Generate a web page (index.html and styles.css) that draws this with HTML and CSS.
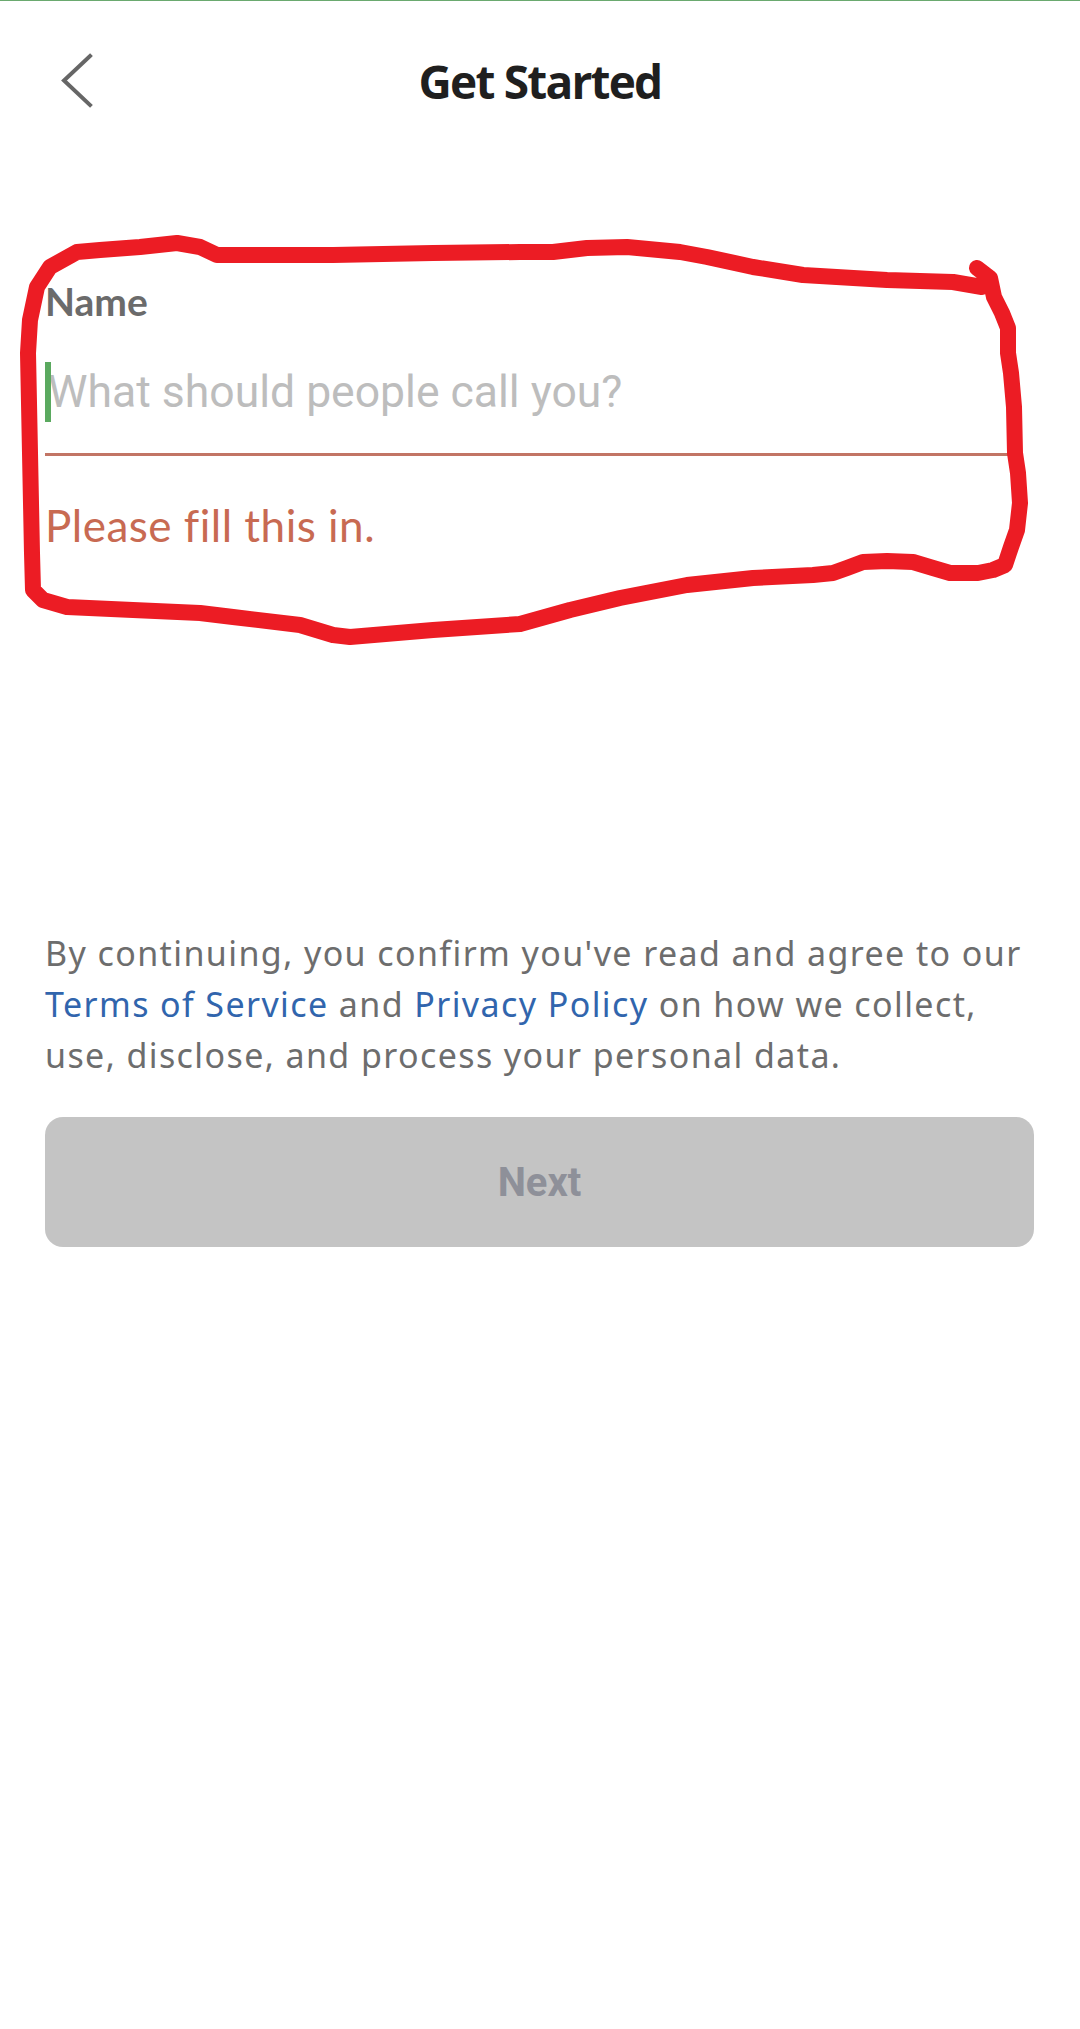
FILE: index.html
```html
<!DOCTYPE html>
<html lang="en">
<head>
    <meta charset="UTF-8">
    <meta name="viewport" content="width=device-width, initial-scale=1.0">
    <title>Get Started</title>
    <link rel="stylesheet" href="styles.css">
</head>
<body>
    <div class="screen">
        <header class="topbar">
            <button class="back" aria-label="Back">
                <svg width="34" height="56" viewBox="0 0 34 56">
                    <polyline points="30,3 4,27.5 30,52" fill="none" stroke="#666" stroke-width="4" stroke-linecap="square"/>
                </svg>
            </button>
            <h1 class="title">Get Started</h1>
            <span class="spacer"></span>
        </header>

        <main class="content">
            <div class="form">
                <label class="label" for="name">Name</label>
                <div class="field">
                    <span class="caret"></span>
                    <input type="text" id="name" placeholder="What should people call you?">
                </div>
                <p class="error">Please fill this in.</p>
            </div>

            <p class="terms">
                By continuing, you confirm you've read and agree to our
                <a href="#">Terms of Service</a> and <a href="#">Privacy Policy</a> on how we collect,
                use, disclose, and process your personal data.
            </p>

            <button class="next" disabled>Next</button>
        </main>

        <!-- hand drawn marker around the name field -->
        <svg class="scribble" width="1080" height="700" viewBox="0 0 1080 700">
            <path d="M977 268 L990 278 L994 297 L1002 313 L1008 328 L1008 353 L1011 373 L1014 407 L1015 453 L1018 473 L1020 503 L1017 530 L1011 547 L1005 565 L993 570 L978 573 L950 573 L933 568 L913 562 L887 561 L863 562 L847 568 L833 573 L813 575 L753 578 L687 585 L620 598 L570 610 L520 624 L433 630 L350 637 L333 635 L300 625 L233 617 L200 613 L133 610 L67 607 L43 600 L33 590 L32 553 L30 453 L28 353 L30 320 L37 287 L50 267 L77 252 L100 250 L140 247 L177 243 L200 247 L217 255 L253 255 L333 255 L433 253 L520 252 L553 252 L587 248 L627 247 L680 252 L707 257 L753 267 L803 275 L887 280 L953 282 L982 287"
                  fill="none" stroke="#ec1c24" stroke-width="16" stroke-linecap="round" stroke-linejoin="round"/>
        </svg>
    </div>
</body>
</html>
```

FILE: styles.css
```css
* {
    box-sizing: border-box;
}

body {
    margin: 0;
    background-color: #fff;
    font-family: Lato, "Noto Sans", sans-serif;
}

.screen {
    position: relative;
    width: 1080px;
    min-height: 2029px;
    border-top: 1px solid #6aa96f;
}

.topbar {
    display: grid;
    grid-template-columns: 120px 1fr 120px;
    align-items: center;
    height: 159px;
}

.back {
    display: flex;
    align-items: center;
    padding: 0 0 0 60px;
    border: none;
    background: none;
}

.title {
    margin: 0;
    text-align: center;
    font-family: "Open Sans", sans-serif;
    font-size: 46px;
    font-weight: 700;
    letter-spacing: -1.8px;
    color: #1f1f1f;
}

.content {
    padding: 0 46px 0 45px;
}

.form {
    padding: 118px 11px 0 0;
}

.label {
    display: block;
    font-size: 39px;
    line-height: 46px;
    font-weight: 700;
    color: #6b6b6b;
}

.field {
    position: relative;
    margin-top: 38px;
    padding-bottom: 31px;
    border-bottom: 3px solid #c27565;
}

.field input {
    display: block;
    width: 100%;
    height: 60px;
    padding: 0 0 0 3px;
    border: none;
    outline: none;
    font-family: Roboto, sans-serif;
    font-size: 44.5px;
    line-height: 60px;
    color: #333;
    background: none;
}

.field input::placeholder {
    color: #bdbdbd;
}

.caret {
    position: absolute;
    left: 0;
    top: 0;
    width: 6px;
    height: 60px;
    background-color: #5aa95f;
}

.error {
    margin: 41px 0 0;
    font-size: 44px;
    line-height: 56px;
    letter-spacing: 0.5px;
    color: #c86a52;
}

.terms {
    margin: 375px 0 0;
    font-family: "Noto Sans", sans-serif;
    font-size: 34px;
    line-height: 51px;
    letter-spacing: 1.4px;
    color: #6d6d6d;
}

.terms a {
    color: #3165ad;
    text-decoration: none;
}

.next {
    display: block;
    width: 100%;
    height: 130px;
    margin-top: 36px;
    border: none;
    border-radius: 18px;
    background-color: #c4c4c4;
    font-family: Roboto, sans-serif;
    font-size: 40px;
    font-weight: 700;
    color: #8e9099;
}

.scribble {
    position: absolute;
    left: 0;
    top: -1px;
    pointer-events: none;
}
```
